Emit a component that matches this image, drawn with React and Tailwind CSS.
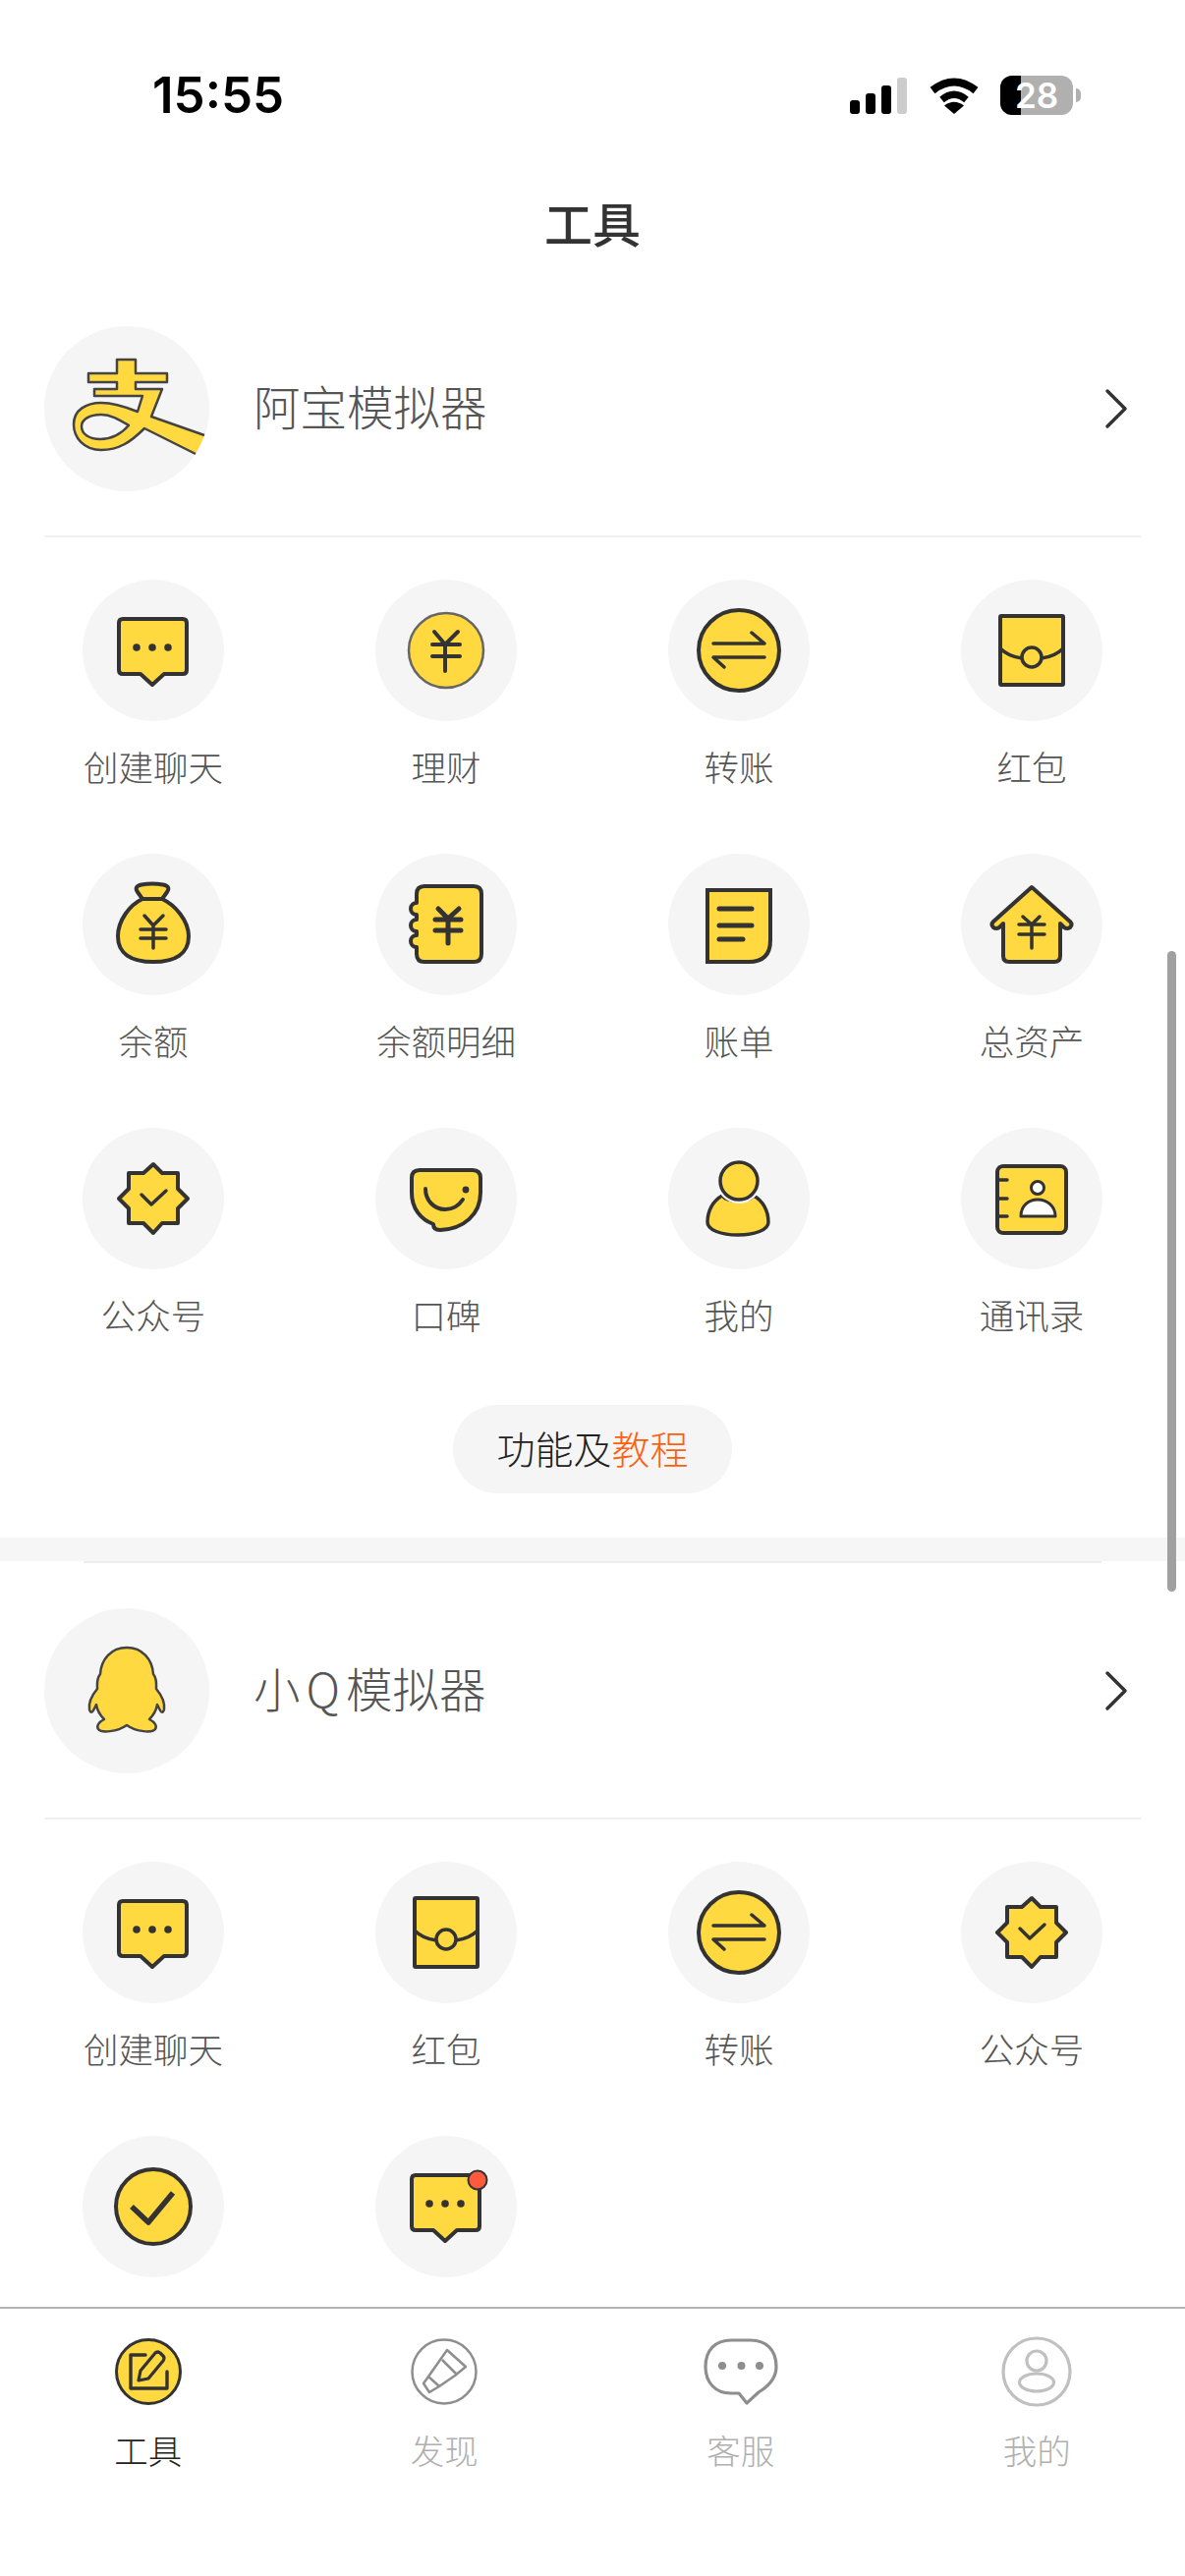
const Y = '#FFD93F'
const K = '#333333'

function Ico({ children }) {
    return (
        <svg viewBox="0 0 144 144" width="144" height="144" fill={Y} stroke={K} strokeWidth="4" strokeLinecap="round" strokeLinejoin="round" className="block">
            {children}
        </svg>
    )
}

const IconChat = ({ dot }) => (
    <Ico>
        <path d="M41 40 H102 Q106 40 106 44 V92 Q106 96 102 96 H83 L71 107 L59 96 H41 Q37 96 37 92 V44 Q37 40 41 40 Z" />
        <g fill={K} stroke="none">
            <circle cx="55" cy="69" r="3.8" /><circle cx="71" cy="69" r="3.8" /><circle cx="87" cy="69" r="3.8" />
        </g>
        {dot && <circle cx="104" cy="45" r="9.5" fill="#FF5A3C" strokeWidth="2" />}
    </Ico>
)

const IconCoin = () => (
    <Ico>
        <circle cx="72" cy="72" r="38" strokeWidth="2.5" stroke="#666666" />
        <path d="M60 53 L71 66 L84 53 M58 66 H86 M58 78 H86 M71 66 V93" fill="none" strokeWidth="4" />
    </Ico>
)

const IconTransfer = () => (
    <Ico>
        <circle cx="72" cy="72" r="41" />
        <path d="M46 65 H98 L85 54 M98 79 H46 L57 89" fill="none" strokeWidth="3.5" />
    </Ico>
)

const IconPacket = () => (
    <Ico>
        <rect x="40" y="37" width="64" height="70" rx="1" />
        <path d="M40 70 C47 77 54 79 62 80 M82 80 C90 79 97 77 104 70" fill="none" strokeWidth="3.5" />
        <circle cx="72" cy="79" r="10" strokeWidth="3.5" />
    </Ico>
)

const IconBag = () => (
    <Ico>
        <path d="M61 46 C48 52 36 68 36 84 C36 102 50 110 72 110 C94 110 108 102 108 84 C108 68 94 52 81 46 Z" />
        <path d="M61 46 L56 39 Q52 33 60 31.5 Q71 29.5 82 31.5 Q90 33 86 39 L81 46 Z" />
        <path d="M63 63 L72 73 L82 63 M59 77 H85 M59 86 H85 M72 73 V96" fill="none" strokeWidth="3.5" />
    </Ico>
)

const IconBook = () => (
    <Ico>
        <path d="M42 50 V41 Q42 33 50 33 H100 Q108 33 108 41 V102 Q108 110 100 110 H50 Q42 110 42 102 V95 A6 6 0 0 1 42 83 V79 A6 6 0 0 1 42 67 V62 A6 6 0 0 1 42 50 Z" />
        <path d="M64 56 L74 66 L85 56 M61 67 H87 M61 78 H87 M74 66 V91" fill="none" strokeWidth="5" />
    </Ico>
)

const IconBill = () => (
    <Ico>
        <path d="M40 37 H104 V88 Q104 110 82 110 H40 Z" strokeLinejoin="miter" />
        <path d="M52 56 H85 M52 73 H85 M52 87 H76" fill="none" strokeWidth="5" />
    </Ico>
)

const IconHouse = () => (
    <Ico>
        <path d="M72 34 L33 69 Q30 72 33 75 Q36 77 39 75 L43 71 V104 Q43 110 49 110 H95 Q101 110 101 104 V71 L105 75 Q108 77 111 75 Q114 72 111 69 Z" />
        <path d="M63 64 L72 72 L80 64 M59 72 H85 M59 82 H85 M72 72 V96" fill="none" strokeWidth="3.5" />
    </Ico>
)

const IconBadge = () => (
    <Ico>
        <path d="M72 37 L81 46 H97 V62 L107 72 L97 82 V97 H81 L72 107 L62 97 H47 V82 L37 72 L47 62 V46 H62 Z" />
        <path d="M60 68 L70 78 L85 64" fill="none" strokeWidth="3.5" />
    </Ico>
)

const IconSmile = () => (
    <Ico>
        <path d="M45 43 H99 Q107 43 107 51 V66 C107 88 90 103 66 104 Q59 104 59 98 C46 93 37 82 37 66 V51 Q37 43 45 43 Z" />
        <path d="M51 62 C51 74 60 83 71 83 C79 83 85 79 89 73" fill="none" />
        <circle cx="92" cy="63" r="3.4" fill={K} stroke="none" />
    </Ico>
)

const IconPerson = () => (
    <Ico>
        <path d="M55 69 C46 74 40 84 40 96 C40 104 54 109 71 109 C88 109 102 104 102 96 C102 84 96 74 87 69 C82 76 60 76 55 69 Z" strokeWidth="3.5" />
        <circle cx="72" cy="54" r="21.5" fill="none" stroke="#f5f5f5" strokeWidth="3" />
        <circle cx="72" cy="54" r="19" strokeWidth="3.5" />
    </Ico>
)

const IconContacts = () => (
    <Ico>
        <rect x="37" y="39" width="70" height="68" rx="6" />
        <path d="M37 53 H47 M37 72 H47 M37 90 H47" fill="none" strokeWidth="3.5" />
        <circle cx="78" cy="61" r="6.5" fill="#ffffff" strokeWidth="3" />
        <path d="M61 90 C61 79 69 73 78 73 C87 73 96 79 96 90 Z" fill="#ffffff" strokeWidth="3" />
    </Ico>
)

const IconCheck = () => (
    <Ico>
        <circle cx="72" cy="72" r="38" />
        <path d="M50 72 L67 88 L92 58" fill="none" strokeWidth="5.5" strokeLinecap="butt" />
    </Ico>
)

function LogoAli() {
    return (
        <svg viewBox="0 0 168 168" width="168" height="168" className="block">
            <path
                fillRule="evenodd"
                fill={Y}
                d="M74 34 H93 V48 H125 V57 H93 V64 H120 L109 92 L163 111 Q159 122 154 130 L102 104 C88 118 76 126 58 126 C40 126 30 113 30 100 C30 85 43 78 58 78 C72 78 85 83 95 87 L100 71 H51 V64 H74 V57 H45 V48 H74 Z M86 101 C76 95 68 90 58 90 C46 90 38 95 38 102 C38 110 46 115 57 115 C68 115 78 110 86 101 Z"
            />
            <path
                fill="none"
                stroke="#444444"
                strokeWidth="2.5"
                strokeLinejoin="round"
                d="M154 130 L102 104 C88 118 76 126 58 126 C40 126 30 113 30 100 C30 85 43 78 58 78 C72 78 85 83 95 87 L100 71 H51 V64 H74 V57 H45 V48 H74 V34 H93 V48 H125 V57 H93 V64 H120 L109 92 L163 111 M86 101 C76 95 68 90 58 90 C46 90 38 95 38 102 C38 110 46 115 57 115 C68 115 78 110 86 101 Z"
            />
        </svg>
    )
}

function LogoQQ() {
    return (
        <svg viewBox="0 0 168 168" width="168" height="168" className="block">
            <path
                fill={Y}
                stroke="#444444"
                strokeWidth="2.5"
                strokeLinejoin="round"
                d="M84 40 C68 40 58 52 57 67 C53 72 54 76 54 82 C49 88 45 96 46 103 C47 107 49 106 50 104 L53 98 C54 104 57 109 61 113 C55 116 53 120 55 123 C58 127 74 126 84 119 C94 126 110 127 113 123 C115 120 113 116 107 113 C111 109 114 104 115 98 L118 104 C119 106 121 107 122 103 C123 96 119 88 114 82 C114 76 115 72 111 67 C110 52 100 40 84 40 Z"
            />
        </svg>
    )
}

const aliTools = [
    ['创建聊天', <IconChat />], ['理财', <IconCoin />], ['转账', <IconTransfer />], ['红包', <IconPacket />],
    ['余额', <IconBag />], ['余额明细', <IconBook />], ['账单', <IconBill />], ['总资产', <IconHouse />],
    ['公众号', <IconBadge />], ['口碑', <IconSmile />], ['我的', <IconPerson />], ['通讯录', <IconContacts />],
]

const qqTools = [
    ['创建聊天', <IconChat />], ['红包', <IconPacket />], ['转账', <IconTransfer />], ['公众号', <IconBadge />],
    ['', <IconCheck />], ['', <IconChat dot />],
]

function SectionHead({ logo, children }) {
    return (
        <div className="mx-[45px] flex items-center pt-[46px] pb-[45px] border-b-2 border-[#f0f0f0]">
            <div className="w-[168px] h-[168px] rounded-full bg-[#f5f5f5] shrink-0 overflow-hidden">{logo}</div>
            <div className="ml-[45px] mb-[6px] flex-1 text-[47.5px] leading-[60px] font-light text-[#555555]">{children}</div>
            <svg width="24" height="42" viewBox="0 0 24 42" fill="none" stroke="#333333" strokeWidth="3.5" strokeLinecap="round" strokeLinejoin="round" className="mr-[13px]">
                <path d="M3 3 L21 21 L3 39" />
            </svg>
        </div>
    )
}

function ToolGrid({ items }) {
    return (
        <div className="grid grid-cols-4 gap-y-[65px] px-[7px] pt-[43px]">
            {items.map(([label, icon], i) => (
                <div key={i} className="flex flex-col items-center">
                    <div className="w-[144px] h-[144px] rounded-full bg-[#f5f5f5]">{icon}</div>
                    {label && <div className="mt-[22px] text-[35.5px] leading-[48px] font-light text-[#555555]">{label}</div>}
                </div>
            ))}
        </div>
    )
}

function TabEdit() {
    return (
        <svg width="68" height="70" viewBox="0 0 68 70" fill="none" stroke="#333333" strokeLinecap="round" strokeLinejoin="round">
            <circle cx="34" cy="35" r="32.5" fill={Y} strokeWidth="3" />
            <path d="M31 18 H16 V52 H53 V35" strokeWidth="3.4" />
            <path d="M24 44 L26 34 L41 16 Q43 14 46 16 L49 19 Q51 21 49 24 L34 42 Z" strokeWidth="3.2" />
        </svg>
    )
}

function TabMarker() {
    return (
        <svg width="68" height="70" viewBox="0 0 68 70" fill="none" stroke="#8e8e8e" strokeWidth="2.5" strokeLinejoin="round">
            <circle cx="34" cy="35" r="32.5" />
            <path d="M37 13 L56 30 L45 39 L29 50 L18 40 Z M29 50 L19 56 L13 47 L18 40 M32 23 L47 38" />
        </svg>
    )
}

function TabBubble() {
    return (
        <svg width="76" height="70" viewBox="0 0 76 70" fill="none" stroke="#8e8e8e" strokeWidth="3.2" strokeLinejoin="round">
            <path d="M28 3 H48 C64 3 74 13 74 30 C74 42 66 50 56 56 L44 67 L36 57 H28 C12 57 2 46 2 30 C2 13 12 3 28 3 Z" />
            <g fill="#8e8e8e" stroke="none">
                <circle cx="19" cy="29" r="4" /><circle cx="38.5" cy="29" r="4" /><circle cx="57" cy="29" r="4" />
            </g>
        </svg>
    )
}

function TabUser() {
    return (
        <svg width="72" height="72" viewBox="0 0 72 72" fill="none" stroke="#c0c0c0" strokeWidth="3.2">
            <circle cx="36" cy="36" r="34" />
            <circle cx="36" cy="25" r="10" />
            <ellipse cx="36" cy="47" rx="17.5" ry="9" />
        </svg>
    )
}

const tabs = [
    ['工具', <TabEdit />, true],
    ['发现', <TabMarker />, false],
    ['客服', <TabBubble />, false],
    ['我的', <TabUser />, false],
]

function StatusBar() {
    return (
        <div className="h-[170px] pt-[77px] pl-[155px] pr-[106px] flex justify-between items-start">
            <div className="font-['Inter',sans-serif] font-semibold text-[51px] leading-[40px] text-black">15:55</div>
            <div className="flex items-center h-[40px]">
                <div className="flex items-end gap-[6px] h-[37px]">
                    <div className="w-[10px] h-[14px] rounded-[3px] bg-black" />
                    <div className="w-[10px] h-[21px] rounded-[3px] bg-black" />
                    <div className="w-[10px] h-[29px] rounded-[3px] bg-black" />
                    <div className="w-[10px] h-[37px] rounded-[3px] bg-[#cccccc]" />
                </div>
                <svg width="50" height="37" viewBox="0 0 50 37" className="ml-[23px]" fill="none" stroke="#000000" strokeLinecap="butt">
                    <path d="M3 13 Q25 -4 47 13" strokeWidth="8" />
                    <path d="M12.5 22.5 Q25 12 37.5 22.5" strokeWidth="7" />
                    <path d="M25 37 L15 28.5 Q25 21 35 28.5 Z" fill="#000000" stroke="none" />
                </svg>
                <div className="ml-[22px] relative w-[74px] h-[40px] rounded-[12px] bg-[#b0b0b0] flex">
                    <div className="w-[21px] rounded-l-[12px] bg-black" />
                    <div className="absolute inset-0 flex items-center justify-center font-['Inter',sans-serif] font-semibold text-[35px] leading-[40px] text-white">28</div>
                </div>
                <div className="ml-[3px] w-[5px] h-[14px] rounded-r-full bg-[#b0b0b0]" />
            </div>
        </div>
    )
}

export default function App() {
    return (
        <div className="relative w-[1206px] h-[2622px] bg-white overflow-hidden flex flex-col font-['Noto_Sans_CJK_SC',sans-serif]">
            <div className="flex-1 min-h-0 overflow-hidden">
                <StatusBar />
                <div className="h-[116px] text-center text-[49px] leading-[112px] font-medium text-[#333333]">工具</div>

                <SectionHead logo={<LogoAli />}>阿宝模拟器</SectionHead>
                <ToolGrid items={aliTools} />

                <div className="flex justify-center mt-[68px] mb-[45px]">
                    <button className="w-[284px] h-[90px] pb-[3px] rounded-full bg-[#f5f5f5] text-[39px] font-light text-[#222222]">
                        功能及<span className="text-[#FF5F0F]">教程</span>
                    </button>
                </div>

                <div className="h-[24px] bg-[#f6f6f6]" />
                <div className="mx-[85px] h-[2px] bg-[#eeeeee]" />

                <SectionHead logo={<LogoQQ />}>小<span className="mx-[6px]">Q</span>模拟器</SectionHead>
                <ToolGrid items={qqTools} />
            </div>

            <div className="h-[274px] shrink-0 bg-white border-t-2 border-[#b4b4b4] grid grid-cols-4 content-start pt-[29px]">
                {tabs.map(([label, icon, active]) => (
                    <div key={label} className="flex flex-col items-center">
                        <div className="h-[70px] flex items-center justify-center">{icon}</div>
                        <div className={active ? 'mt-[22px] text-[34.5px] leading-[44px] font-light text-[#222222]' : 'mt-[22px] text-[34.5px] leading-[44px] font-light text-[#b0b0b0]'}>{label}</div>
                    </div>
                ))}
            </div>

            {/* scroll indicator */}
            <div className="absolute left-[1188px] top-[968px] w-[9px] h-[652px] rounded-full bg-[#a0a0a0]" />
        </div>
    )
}
